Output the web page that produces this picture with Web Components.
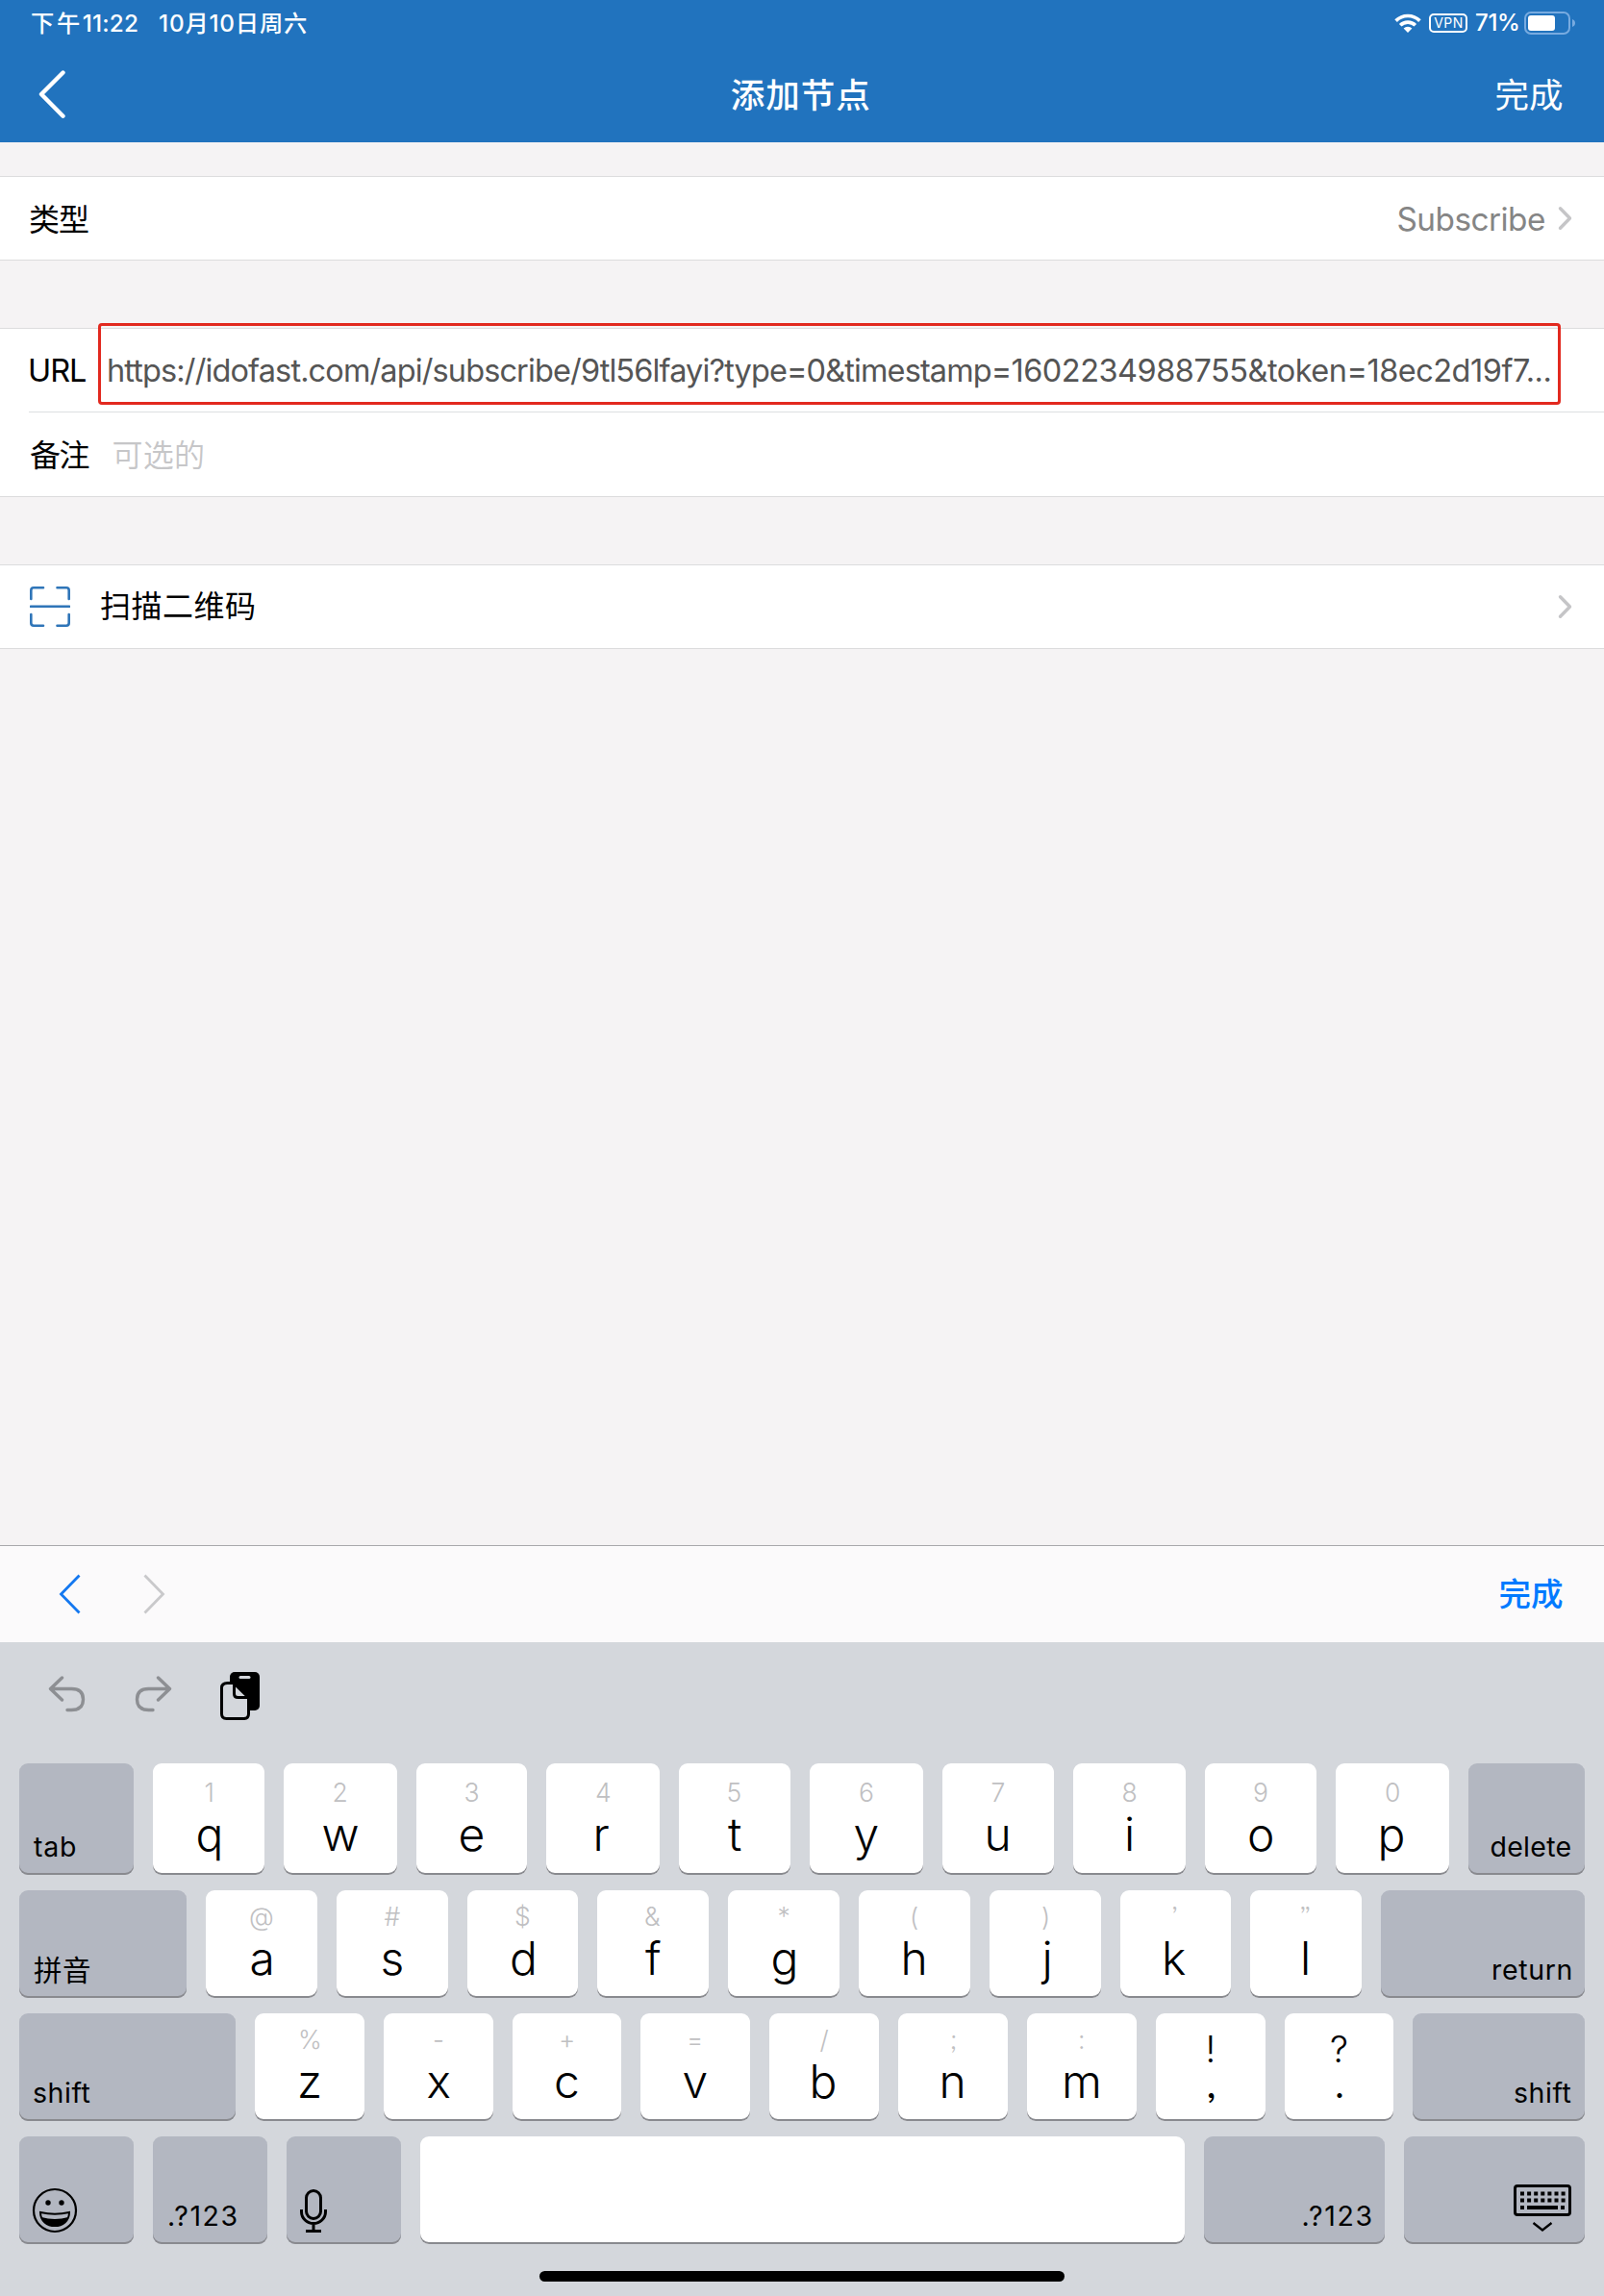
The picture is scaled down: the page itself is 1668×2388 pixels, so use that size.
<!DOCTYPE html>
<html lang="zh-CN">
<head>
<meta charset="utf-8">
<title>添加节点</title>
<style>
html,body{margin:0;padding:0}
body{width:1668px;height:2388px;overflow:hidden;background:#f5f3f4;font-family:Inter,"Noto Sans CJK SC",sans-serif;color:#000}
</style>
</head>
<body>
<node-screen></node-screen>
<script>
const FAMILY = 'Inter, "Noto Sans CJK SC", sans-serif';
const pen = document.createElement('canvas').getContext('2d');

function define(name, render) {
  customElements.define(name, class extends HTMLElement {
    connectedCallback() {
      if (this.shadowRoot) return;
      this.attachShadow({ mode: 'open' }).innerHTML = render(this);
    }
  });
}

/* Text whose box hugs its ink; w tracks the letters out to a set width.
   skew="n:a:b" adds a px of tracking to the first n letters and b px to the rest. */
customElements.define('ink-text', class extends HTMLElement {
  connectedCallback() {
    if (this.shadowRoot) return;
    const text = this.getAttribute('t'), size = +this.getAttribute('size');
    const weight = this.getAttribute('weight') || 400;
    pen.font = `${weight} ${size}px ${FAMILY}`;
    const m = pen.measureText(text), chars = [...text], n = chars.length;
    const ink = m.actualBoundingBoxRight + m.actualBoundingBoxLeft;
    const w = this.hasAttribute('w') ? +this.getAttribute('w') : ink;
    const ls = n > 1 ? (w - ink) / (n - 1) : 0;
    const [head, a, b] = (this.getAttribute('skew') || '0:0:0').split(':').map(Number);
    const root = this.attachShadow({ mode: 'open' });
    root.innerHTML = `<style>
      :host{display:block;flex:none;white-space:pre}
      div{font:${weight} ${size}px/var(--lh,40px) ${FAMILY};font-feature-settings:"ss03";letter-spacing:${ls + b}px;
        margin-left:${m.actualBoundingBoxLeft}px;margin-right:${m.actualBoundingBoxRight - m.width - ls - b}px}
      span{letter-spacing:${ls + a}px}
    </style><div></div>`;
    const box = root.querySelector('div');
    if (head) {
      const s = document.createElement('span');
      s.textContent = chars.slice(0, head).join('');
      box.append(s, chars.slice(head).join(''));
    } else box.textContent = text;
  }
});

define('status-bar', () => `<style>
  :host{display:flex;height:48px;padding:0 30px 0 33px;color:#fff;align-items:center;box-sizing:border-box;--lh:48px}
  .gap{width:23px}.fill{flex:1}
  svg{display:block;flex:none}
  .vpn{box-sizing:border-box;width:40px;height:20px;border:2px solid #fff;border-radius:5px;margin:0 9px 0 8px;
    display:flex;justify-content:center;align-items:center;--lh:16px}
</style>
<ink-text t="下午11:22" size="24.3" w="110" weight="500" skew="2:1.6:-0.8"></ink-text><div class="gap"></div>
<ink-text t="10月10日周六" size="24.3" w="153" weight="500"></ink-text><div class="fill"></div>
<svg width="28" height="48" viewBox="1450 0 28 48" fill="none" stroke="#fff" stroke-width="3.7">
  <path d="M1451.6 21.6a17.6 17.6 0 0 1 24.8 0"/><path d="M1456.2 26.3a11.1 11.1 0 0 1 15.6 0"/>
  <path d="M1464 34l-4.4-4.5a6.3 6.3 0 0 1 8.8 0z" fill="#fff" stroke="none"/></svg>
<div class="vpn"><ink-text t="VPN" size="14" w="29.5"></ink-text></div>
<ink-text t="71%" size="24" w="44" weight="500"></ink-text>
<svg style="margin-left:6px" width="53" height="48" viewBox="1585 0 53 48">
  <rect x="1586" y="13" width="46" height="22" rx="6" fill="none" stroke="#78abe0" stroke-width="2"/>
  <rect x="1589" y="16" width="28" height="16" rx="3" fill="#fff"/>
  <path d="M1635 20q3 1.200 3 4t-3 4z" fill="#78abe0"/></svg>`);

define('nav-header', () => `<style>
  :host{display:block;background:#2173be;height:148px;color:#fff}
  .bar{display:flex;height:100px;align-items:center;justify-content:space-between;padding:0 43px 0 40px}
  .side{width:74px;display:flex}.end{justify-content:flex-end}
  ink-text{margin-top:3px}
  svg{display:block}
</style>
<status-bar></status-bar>
<div class="bar"><div class="side"><svg width="30" height="54" viewBox="40 71 30 54" fill="none" stroke="#fff" stroke-width="4.400" stroke-linecap="round" stroke-linejoin="round"><path d="M65.500 75.500L43 98l22.500 22.700"/></svg></div>
<ink-text t="添加节点" size="35.500" weight="500" w="143.500"></ink-text>
<div class="side end"><ink-text t="完成" size="35.500" w="69.500"></ink-text></div></div>`);

define('cell-group', () => `<style>
  :host{display:block;background:#fff;border:solid #dcdcdd;border-width:1px 0}
</style><slot></slot>`);

define('list-cell', el => `<style>
  :host{display:flex;height:86px;align-items:center;padding-left:31px;position:relative}
  .fill{flex:1}
  svg{display:block;flex:none;margin-right:33px}
</style><slot></slot><div class="fill"></div><slot name="value"></slot>
${el.hasAttribute('more') ? `<svg width="15" height="26" viewBox="0 0 15 26" fill="none" stroke="#c5c5c7" stroke-width="3.400" stroke-linecap="round" stroke-linejoin="round"><path d="M2.500 2.700L12.500 13l-10 10.300"/></svg>` : ''}`);

define('node-form', () => `<style>
  :host{display:flex;flex-direction:column;height:1459px;box-sizing:border-box;padding-top:35px}
  .b{margin-top:70px}.c{margin-top:70px}
  .sep{height:1px;background:#dcdfe1;margin-left:30px}
  ink-text{margin-top:2px}
  .cn{margin-top:3px}
  .value{color:#858585;margin-right:14px}
  .url{color:#555;margin-left:24px}
  .hint{color:#c6c6c8;margin-left:25px}
  .mark{position:absolute;left:102px;top:-6px;width:1521px;height:85px;box-sizing:border-box;border:3px solid #e2291f;border-radius:4px}
  .scan{margin:0 0 0 32px}
  svg{display:block}
</style>
<cell-group><list-cell more><ink-text class="cn" t="类型" size="32" w="61"></ink-text>
  <ink-text slot="value" class="value" t="Subscribe" size="33.300" w="152.500"></ink-text></list-cell></cell-group>
<cell-group class="b">
  <list-cell><ink-text t="URL" size="32.500" w="58"></ink-text>
    <ink-text class="url" skew="62:-0.13:0.25" t="https://idofast.com/api/subscribe/9tl56lfayi?type=0&amp;timestamp=1602234988755&amp;token=18ec2d19f7..." size="32.500" w="1498.500"></ink-text>
    <div class="mark"></div></list-cell>
  <div class="sep"></div>
  <list-cell style="height:87px"><ink-text class="cn" t="备注" size="32" w="61.500"></ink-text><ink-text class="hint cn" t="可选的" size="32" w="93.500" weight="350"></ink-text></list-cell>
</cell-group>
<cell-group class="c"><list-cell more>
  <svg width="42" height="42" viewBox="0 0 42 42" fill="none" stroke="#2f75b8" stroke-width="2.600" stroke-linecap="round"><path d="M1.300 13V4q0-2.700 2.700-2.700h10M28.500 1.300H38q2.700 0 2.700 2.700v9M40.700 29v9q0 2.700-2.700 2.700h-9.500M14 40.700H4q-2.700 0-2.700-2.700v-9M1 20.800h40"/></svg>
  <ink-text class="scan" t="扫描二维码" size="32" w="160"></ink-text></list-cell></cell-group>`);

define('input-toolbar', () => `<style>
  :host{display:flex;height:101px;box-sizing:border-box;border-top:1px solid #a8a8ab;background:#fbfafb;align-items:center;justify-content:space-between;padding:0 43px 0 60px;color:#007aff}
  svg{display:block}
</style>
<svg width="114" height="44" viewBox="60 1636 114 44" fill="none" stroke-width="2.800"><path d="M82.500 1638.500L63.500 1658l19 19.500" stroke="#1478f0"/><path d="M150.500 1638.500L169.500 1658l-19 19.500" stroke="#c9c9cb"/></svg>
<ink-text t="完成" size="33.500" weight="500" w="65.500"></ink-text>`);

define('key-cap', el => {
  const g = k => el.getAttribute(k);
  const esc = s => s.replace(/&/g, '&amp;').replace(/"/g, '&quot;');
  const fn = el.hasAttribute('fn');
  let body = '<slot></slot>';
  if (g('k')) body = g('hint')
    ? `<ink-text class="h" t="${esc(g('hint'))}" size="26.500" weight="350"></ink-text><ink-text class="k" t="${g('k')}" size="48" weight="360"></ink-text>`
    : `<ink-text class="p" t="${g('up')}" size="38" weight="350"></ink-text><ink-text class="p q" t="${g('k')}" size="38"></ink-text>`;
  if (g('label')) body = `<ink-text class="l" t="${g('label')}" size="${g('size') || 28.5}" w="${g('lw')}"></ink-text>`;
  return `<style>
  :host{display:flex;flex-direction:column;flex:none;box-sizing:border-box;width:${g('w')}px;border-radius:9px;
    background:${fn ? '#b3b7c1' : '#fff'};box-shadow:inset 0 -2px 0 #898a8f;
    ${fn ? `justify-content:flex-end;align-items:${g('fn') === 'end' ? 'flex-end' : 'flex-start'};padding:0 14.500px 12.500px 15px`
         : 'align-items:center;padding-top:var(--key-top,12px)'}}
  .h{color:#c0c0c2;--lh:30px}
  .k{--lh:50px;margin-top:4px}
  .p{--lh:30px;margin-top:10px}.q{margin-top:7px}
  .l{--lh:34px;margin-left:${g('shift') || 0}px}
  </style>${body}`;
});

define('key-row', () => `<style>:host{display:flex;gap:20px;height:112px}</style><slot></slot>`);

const caps = (letters, hints, widths) => [...letters].map((c, i) =>
  `<key-cap k="${c}" hint="${hints[i] === '&' ? '&amp;' : hints[i]}" w="${widths[i]}"></key-cap>`).join('');

define('soft-keyboard', () => `<style>
  :host{display:flex;flex-direction:column;height:680px;box-sizing:border-box;background:#d4d7dc;padding:0 20px}
  .tools{height:126px}
  .tools svg{display:block}
  .rows{display:flex;flex-direction:column;gap:16px}
  .first{height:116px;--key-top:15px}
  .home{width:546px;height:11px;border-radius:6px;background:#000;margin:28px auto 0}
  .ico{display:block;flex:none}
</style>
<div class="tools"><svg width="300" height="126" viewBox="20 1708 300 126">
  <g fill="none" stroke="#8d8f93" stroke-width="3.400" stroke-linecap="round" stroke-linejoin="round">
    <path d="M64.500 1745L52.500 1756.500l12 11.500M53 1756.500h21.500q12 0 12 11t-12 11H70"/>
    <path d="M164.500 1745l12 11.500-12 11.500M176 1756.500h-21.500q-12 0-12 11t12 11h4.500"/></g>
  <rect x="239" y="1739" width="31" height="40" rx="5"/>
  <rect x="248.500" y="1743" width="12" height="3" rx="1.500" fill="#d4d7dc"/>
  <path d="M244 1750.500h-7.500q-6 0-6 5v27q0 5 5 5h18q5 0 5-5V1765l-14.500-14.500z" fill="#d4d7dc" stroke="#000" stroke-width="3"/>
  <path d="M243.500 1751v10.500q0 4 4 4h11z" fill="#d4d7dc" stroke="#000" stroke-width="3" stroke-linejoin="round"/>
</svg></div>
<div class="rows">
<key-row class="first"><key-cap fn label="tab" lw="43" w="119"></key-cap>${caps('qwertyuiop', '1234567890', [116,118,115,118,116,118,116,117,116,118])}<key-cap fn="end" label="delete" lw="83" w="121"></key-cap></key-row>
<key-row><key-cap fn label="拼音" size="29.500" lw="58" w="174"></key-cap>${caps('asdfghjkl', '@#$&*()’”', [116,116,115,116,116,116,116,115,116])}<key-cap fn="end" label="return" lw="80.500" w="212"></key-cap></key-row>
<key-row><key-cap fn label="shift" lw="58.500" w="225"></key-cap>${caps('zxcvbnm', '%-+=/;:', [114,114,113,114,114,114,114])}<key-cap k="," up="!" w="114"></key-cap><key-cap k="." up="?" w="113"></key-cap><key-cap fn="end" label="shift" lw="58.500" w="179"></key-cap></key-row>
<key-row>
  <key-cap fn w="119"><svg class="ico" style="margin:0 0 -1px -2px" width="48" height="48" viewBox="33 2275 48 48"><circle cx="57" cy="2299" r="22" fill="none" stroke="#000" stroke-width="2.200"/><circle cx="50" cy="2291" r="2.700"/><circle cx="64" cy="2291" r="2.700"/><path d="M42 2301q15 3.500 30 0c0 9-7 14-15 14s-15-5-15-14z" fill="none" stroke="#000" stroke-width="2"/><path d="M43 2306q14 4 28 0-4 9-14 9t-14-9z"/></svg></key-cap>
  <key-cap fn label=".?123" shift="2" lw="69.500" w="119"></key-cap>
  <key-cap fn w="119"><svg class="ico" style="margin:0 0 -2px -3px" width="32" height="48" viewBox="310 2276 32 48" fill="none" stroke="#000" stroke-width="3"><rect x="318.500" y="2278.500" width="15" height="29" rx="7.500"/><path d="M313.500 2298v2.500a12.500 12 0 0 0 25 0V2298M326 2312.500v8M318 2320.500h16"/></svg></key-cap>
  <key-cap w="795"></key-cap>
  <key-cap fn="end" label=".?123" lw="70" w="188"></key-cap>
  <key-cap fn="end" w="188"><svg class="ico" width="60" height="50" viewBox="0 0 60 50"><rect x="1.500" y="1.500" width="57" height="30" rx="2.500" fill="none" stroke="#000" stroke-width="3"/><path d="M7 9.500h47M7 16.500h47" stroke="#000" stroke-width="4" stroke-dasharray="4 3.100"/><path d="M7 24h4M14 24h32M49 24h4" stroke="#000" stroke-width="4"/><path d="M20.500 40l9.500 7.500 9.500-7.500" fill="none" stroke="#000" stroke-width="2.300"/></svg></key-cap>
</key-row></div>
<div class="home"></div>`);

define('node-screen', () => `<style>:host{display:block;width:1668px;height:2388px;background:#f5f3f4}</style>
<nav-header></nav-header><node-form></node-form><input-toolbar></input-toolbar><soft-keyboard></soft-keyboard>`);
</script>
</body>
</html>
